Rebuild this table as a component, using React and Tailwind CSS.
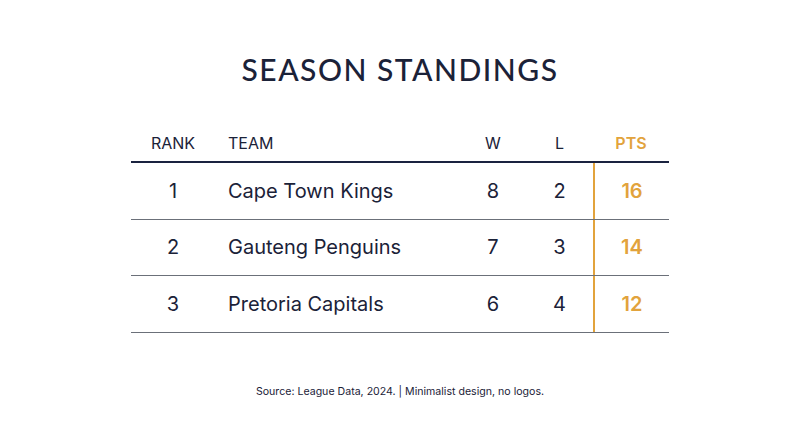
const rows = [
  { rank: 1, team: "Cape Town Kings", w: 8, l: 2, pts: 16 },
  { rank: 2, team: "Gauteng Penguins", w: 7, l: 3, pts: 14 },
  { rank: 3, team: "Pretoria Capitals", w: 6, l: 4, pts: 12 },
];

export default function App() {
  return (
    <div className="w-[800px] h-[447px] bg-white flex flex-col items-center text-[#1b2238] font-['Inter',sans-serif]">
      <h1 className="mt-[51px] text-[30px] leading-[36px] tracking-[0.05em] font-['Lato',sans-serif] font-medium">
        SEASON STANDINGS
      </h1>

      <div className="mt-[45px] w-[538px]">
        <div className="grid grid-cols-[84px_245px_66px_67px_76px] h-[31px] items-start border-b-2 border-[#1a2340] text-[16px] leading-[22px]">
          <div className="text-center">RANK</div>
          <div className="pl-[13px]">TEAM</div>
          <div className="text-center">W</div>
          <div className="text-center">L</div>
          <div className="text-center font-semibold text-[#e2a33c]">PTS</div>
        </div>

        {rows.map((r) => (
          <div
            key={r.rank}
            className="grid grid-cols-[84px_245px_66px_67px_76px] h-[56.5px] border-b border-[#6b7079] text-[20px]"
          >
            <div className="flex items-center justify-center">{r.rank}</div>
            <div className="flex items-center pl-[13px]">{r.team}</div>
            <div className="flex items-center justify-center">{r.w}</div>
            <div className="flex items-center justify-center">{r.l}</div>
            <div className="flex items-center justify-center border-l-2 border-[#e2a33c] font-semibold text-[#e2a33c]">
              {r.pts}
            </div>
          </div>
        ))}
      </div>

      <p className="mt-[51px] text-[10.6px] leading-[16px] text-[#1b2238]">
        Source: League Data, 2024. | Minimalist design, no logos.
      </p>
    </div>
  );
}
